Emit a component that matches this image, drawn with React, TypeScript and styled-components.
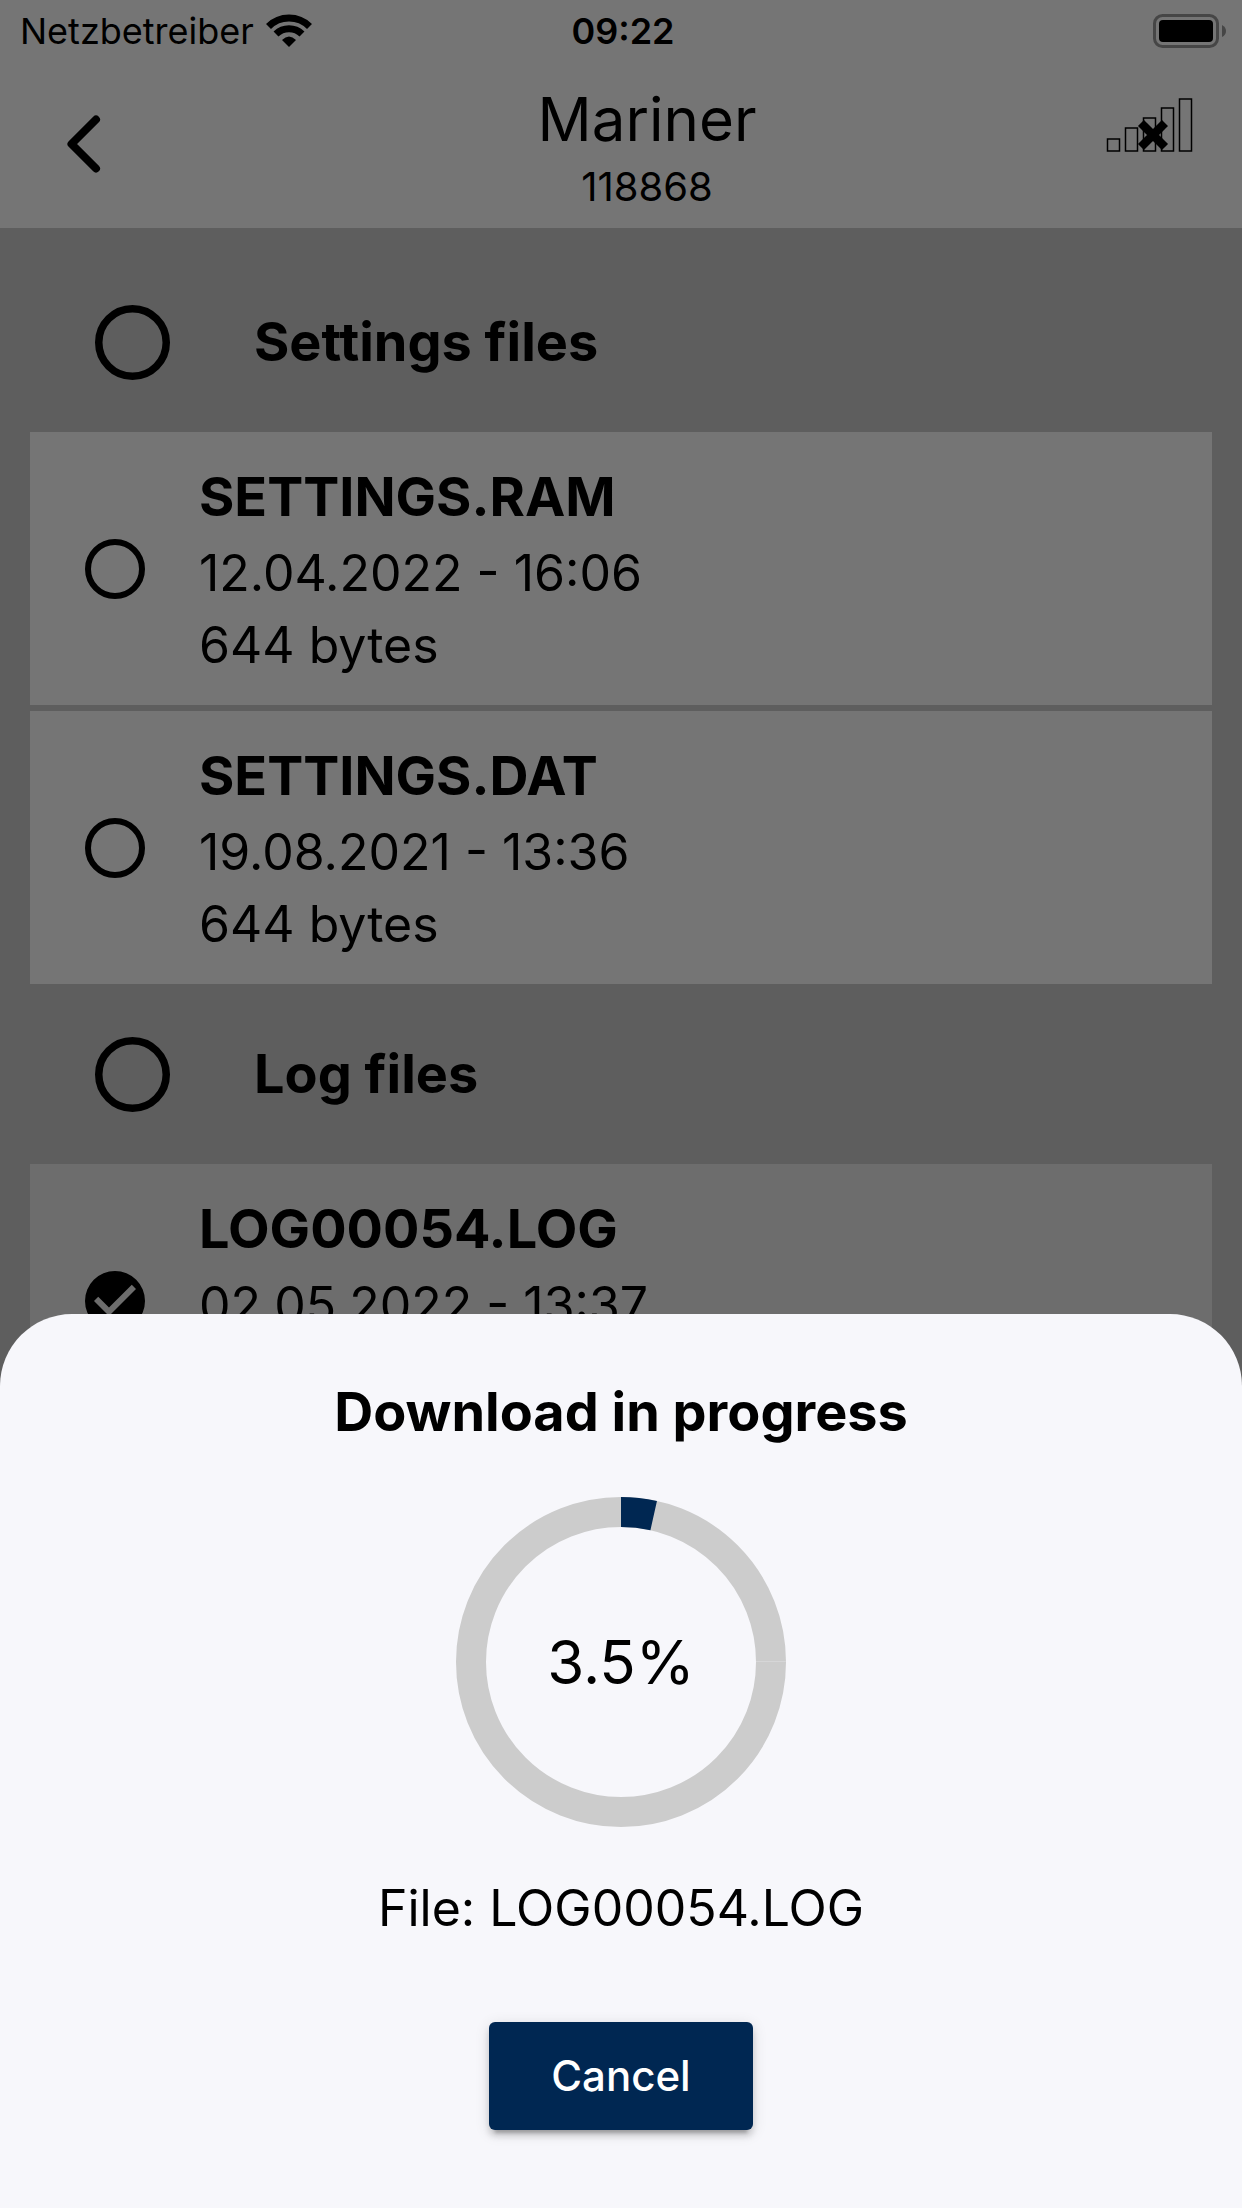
import React, { useState } from "react";
import styled, { createGlobalStyle } from "styled-components";

const GlobalStyle = createGlobalStyle`
  *, *::before, *::after { box-sizing: border-box; }
  body {
    margin: 0;
    background: #cdcdcd;
    color: #000;
    font-family: Inter, "Liberation Sans", sans-serif;
  }
  h1, h2, p { margin: 0; }
`;

const Screen = styled.div`
  height: 100vh;
  overflow: hidden;
`;

const TopArea = styled.header`
  background: #fff;
`;

const StatusBar = styled.div`
  display: grid;
  grid-template-columns: 1fr auto 1fr;
  align-items: center;
  height: 62px;
  padding: 0 16px 0 20px;
  font-size: 36px;
  line-height: 40px;
`;

const Carrier = styled.div`
  display: flex;
  align-items: center;
  gap: 12px;
`;

const Clock = styled.time`
  font-weight: 600;
`;

const BatterySlot = styled.div`
  display: flex;
  justify-content: flex-end;
`;

const Toolbar = styled.div`
  display: grid;
  grid-template-columns: 168px 1fr 116px;
  height: 166px;
`;

const BackButton = styled.button`
  display: flex;
  align-items: center;
  justify-content: flex-start;
  padding: 0 0 2px 66px;
  border: 0;
  background: none;
  color: inherit;
`;

const Heading = styled.div`
  padding-top: 17px;
  text-align: center;
`;

const DeviceName = styled.h1`
  font-size: 60px;
  font-weight: 400;
  line-height: 80px;
`;

const DeviceId = styled.p`
  font-size: 40px;
  font-weight: 400;
  line-height: 56px;
`;

const SignalSlot = styled.div`
  display: flex;
  justify-content: flex-end;
  padding: 35px 49px 0 0;

  svg { flex: none; }
`;

const FileList = styled.main`
  padding: 24px 30px;
`;

const SectionLabel = styled.label`
  display: flex;
  align-items: center;
  gap: 84px;
  height: 180px;
  padding-left: 65px;
  font-size: 54px;
  font-weight: 700;
  line-height: 80px;
`;

const Rows = styled.div`
  display: flex;
  flex-direction: column;
  gap: 6px;
`;

const Row = styled.label<{ $checked: boolean }>`
  display: flex;
  align-items: center;
  gap: 54px;
  min-height: 273px;
  padding: 0 55px;
  background: ${(p) => (p.$checked ? "#ededed" : "#fff")};
`;

const RowText = styled.span`
  display: flex;
  flex-direction: column;
  min-height: 224px;
`;

const FileName = styled.span`
  font-size: 54px;
  font-weight: 700;
  line-height: 80px;
`;

const FileMeta = styled.span`
  font-size: 50px;
  font-weight: 400;
  line-height: 72px;
`;

const Tick = styled.span<{ $size: number }>`
  display: grid;
  flex: none;
  width: ${(p) => p.$size}px;
  height: ${(p) => p.$size}px;

  > * {
    grid-area: 1 / 1;
    width: 100%;
    height: 100%;
    margin: 0;
  }

  svg { pointer-events: none; }
`;

const TickInput = styled.input`
  appearance: none;
  border-radius: 50%;
`;

const Backdrop = styled.div`
  position: fixed;
  inset: 0;
  display: flex;
  align-items: flex-end;
  background: rgba(0, 0, 0, 0.54);
`;

const Sheet = styled.section`
  display: flex;
  flex-direction: column;
  align-items: center;
  width: 100%;
  padding: 60px 30px 78px;
  border-radius: 72px 72px 0 0;
  background: #f7f7fb;
`;

const SheetTitle = styled.h2`
  font-size: 54px;
  font-weight: 700;
  line-height: 76px;
`;

const Gauge = styled.div`
  display: grid;
  place-items: center;
  width: 330px;
  height: 330px;
  margin: 47px 0 45px;

  > * { grid-area: 1 / 1; }
`;

const GaugeValue = styled.span`
  font-size: 60px;
  font-weight: 400;
  line-height: 72px;
`;

const CurrentFile = styled.p`
  font-size: 50px;
  font-weight: 400;
  line-height: 72px;
`;

const CancelButton = styled.button`
  min-width: 264px;
  height: 108px;
  margin-top: 78px;
  padding: 0 60px;
  border: 0;
  border-radius: 6px;
  background: #002752;
  box-shadow: 0 9px 3px -6px rgba(0, 0, 0, 0.2), 0 6px 6px rgba(0, 0, 0, 0.14),
    0 3px 15px rgba(0, 0, 0, 0.12);
  color: #fff;
  font: 500 42px/60px Inter, "Liberation Sans", sans-serif;
`;

function WifiIcon() {
  return (
    <svg width="46" height="34" viewBox="0 0 46 34" aria-hidden="true">
      <g fill="none" stroke="#000" strokeWidth="7">
        <path d="M2.500 12.500A29 29 0 0 1 43.500 12.500" />
        <path d="M10 20A18.500 18.500 0 0 1 36 20" />
      </g>
      <path d="M23 33L16 26Q23 19 30 26Z" />
    </svg>
  );
}

function BatteryIcon() {
  return (
    <svg width="73" height="34" viewBox="0 0 73 34" aria-hidden="true">
      <rect x="1.500" y="1.500" width="63" height="31" rx="8" fill="none" stroke="#999" strokeWidth="3" />
      <rect x="6" y="6" width="54" height="22" rx="4" />
      <path d="M69 11Q73 13 73 17T69 23Z" fill="#999" />
    </svg>
  );
}

function BackIcon() {
  return (
    <svg width="35" height="58" viewBox="0 0 35 58" aria-hidden="true">
      <path
        d="M30 4.500L5.500 29L30 53.500"
        fill="none"
        stroke="#000"
        strokeWidth="8"
        strokeLinecap="round"
        strokeLinejoin="round"
      />
    </svg>
  );
}

function NoSignalIcon() {
  return (
    <svg width="87" height="55" viewBox="0 0 87 55" role="img" aria-label="No connection">
      <g fill="none" stroke="#000" strokeWidth="1.500">
        <rect x="1.500" y="42" width="12" height="12" />
        <rect x="19.500" y="31" width="12" height="23" />
        <rect x="37.500" y="21" width="12" height="33" />
        <rect x="55.500" y="11" width="12" height="43" />
        <rect x="73.500" y="2" width="12" height="52" />
      </g>
      <path d="M38 29L56 47M56 29L38 47" stroke="#000" strokeWidth="8.500" strokeLinecap="square" />
    </svg>
  );
}

function RoundCheckbox({
  size,
  checked,
  onChange,
}: {
  size: number;
  checked: boolean;
  onChange: (next: boolean) => void;
}) {
  return (
    <Tick $size={size}>
      <TickInput type="checkbox" checked={checked} onChange={(e) => onChange(e.target.checked)} />
      <svg viewBox="2 2 20 20" aria-hidden="true">
        {checked ? (
          <path d="M12 2a10 10 0 1 0 0 20a10 10 0 0 0 0-20zm-2 15l-5-5 1.410-1.410L10 14.170l7.590-7.590L19 8l-9 9z" />
        ) : (
          <circle cx="12" cy="12" r="9" fill="none" stroke="#000" strokeWidth="2" />
        )}
      </svg>
    </Tick>
  );
}

function ProgressGauge({ percent }: { percent: number }) {
  const radius = 150;
  const around = 2 * Math.PI * radius;
  return (
    <Gauge role="progressbar" aria-label="Download" aria-valuenow={percent} aria-valuemin={0} aria-valuemax={100}>
      <svg width="330" height="330" viewBox="0 0 330 330" fill="none" strokeWidth="30" aria-hidden="true">
        <circle cx="165" cy="165" r={radius} stroke="#ccc" />
        <path d="M300 164.500H330" stroke="#d6d6d7" strokeWidth="1" />
        <circle
          cx="165"
          cy="165"
          r={radius}
          stroke="#002752"
          strokeDasharray={`${(around * percent) / 100} ${around}`}
          transform="rotate(-90 165 165)"
        />
      </svg>
      <GaugeValue>{percent.toFixed(1)}%</GaugeValue>
    </Gauge>
  );
}

type FileEntry = { name: string; date: string; size?: string };

const sections: { title: string; files: FileEntry[] }[] = [
  {
    title: "Settings files",
    files: [
      { name: "SETTINGS.RAM", date: "12.04.2022 - 16:06", size: "644 bytes" },
      { name: "SETTINGS.DAT", date: "19.08.2021 - 13:36", size: "644 bytes" },
    ],
  },
  {
    title: "Log files",
    files: [{ name: "LOG00054.LOG", date: "02.05.2022 - 13:37" }],
  },
];

export default function App() {
  const [picked, setPicked] = useState<Record<string, boolean>>({ "LOG00054.LOG": true });
  const pick = (key: string) => (next: boolean) => setPicked((p) => ({ ...p, [key]: next }));

  return (
    <Screen>
      <GlobalStyle />
      <TopArea>
        <StatusBar>
          <Carrier>
            Netzbetreiber
            <WifiIcon />
          </Carrier>
          <Clock>09:22</Clock>
          <BatterySlot>
            <BatteryIcon />
          </BatterySlot>
        </StatusBar>
        <Toolbar>
          <BackButton aria-label="Back">
            <BackIcon />
          </BackButton>
          <Heading>
            <DeviceName>Mariner</DeviceName>
            <DeviceId>118868</DeviceId>
          </Heading>
          <SignalSlot>
            <NoSignalIcon />
          </SignalSlot>
        </Toolbar>
      </TopArea>
      <FileList>
        {sections.map((section) => (
          <section key={section.title}>
            <SectionLabel>
              <RoundCheckbox size={75} checked={!!picked[section.title]} onChange={pick(section.title)} />
              {section.title}
            </SectionLabel>
            <Rows>
              {section.files.map((file) => (
                <Row key={file.name} $checked={!!picked[file.name]}>
                  <RoundCheckbox size={60} checked={!!picked[file.name]} onChange={pick(file.name)} />
                  <RowText>
                    <FileName>{file.name}</FileName>
                    <FileMeta>{file.date}</FileMeta>
                    {file.size && <FileMeta>{file.size}</FileMeta>}
                  </RowText>
                </Row>
              ))}
            </Rows>
          </section>
        ))}
      </FileList>
      <Backdrop>
        <Sheet role="dialog" aria-modal="true" aria-labelledby="download-title">
          <SheetTitle id="download-title">Download in progress</SheetTitle>
          <ProgressGauge percent={3.5} />
          <CurrentFile>File: LOG00054.LOG</CurrentFile>
          <CancelButton>Cancel</CancelButton>
        </Sheet>
      </Backdrop>
    </Screen>
  );
}
